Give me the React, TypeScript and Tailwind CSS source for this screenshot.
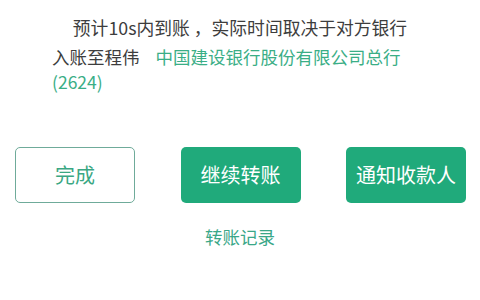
export default function App() {
  return (
    <div
      className="w-[480px] h-[300px] bg-white overflow-hidden"
      style={{ fontFamily: '"Noto Sans CJK SC", "Noto Sans", sans-serif' }}
    >
      {/* arrival notice */}
      <div className="pt-[15px] text-center text-[17.8px] leading-[25px] text-[#3d3d3d]">
        预计10s内到账 ，实际时间取决于对方银行
      </div>
      <div className="mt-[4px] px-[52px] text-[17.5px] leading-[25px]">
        <div className="flex gap-[16px]">
          <span className="text-[#3d3d3d]">入账至程伟</span>
          <span className="text-[#3aae86]">中国建设银行股份有限公司总行</span>
        </div>
        <div className="text-[#3aae86]">(2624)</div>
      </div>

      {/* actions */}
      <div className="mt-[53px] flex justify-between pl-[15px] pr-[14px]">
        <button className="w-[120px] h-[56px] rounded-[5px] border border-[#6fab9a] bg-white text-[20px] text-[#3aa783]">
          完成
        </button>
        <button className="w-[120px] h-[56px] rounded-[5px] bg-[#20aa7b] text-[20px] text-white">
          继续转账
        </button>
        <button className="w-[120px] h-[56px] rounded-[5px] bg-[#20aa7b] text-[20px] text-white">
          通知收款人
        </button>
      </div>

      <div className="mt-[21px] text-center text-[17.5px] leading-[25px] text-[#3aa788]">
        转账记录
      </div>
    </div>
  );
}
